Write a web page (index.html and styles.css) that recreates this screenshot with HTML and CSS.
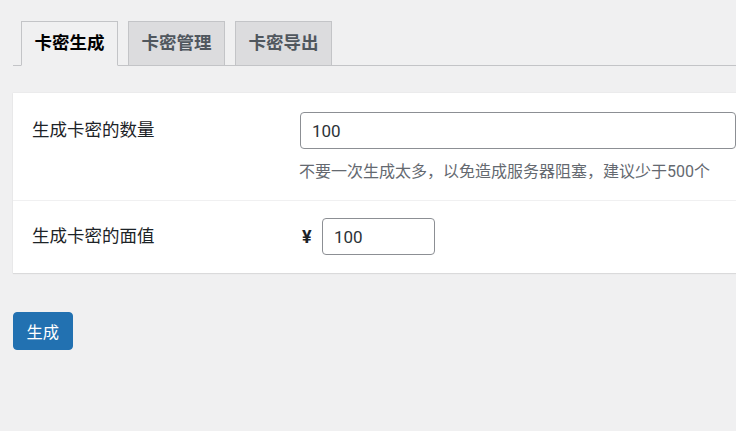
FILE: index.html
```html
<!DOCTYPE html>
<html lang="zh-CN">
<head>
<meta charset="utf-8">
<title>卡密生成</title>
<link rel="stylesheet" href="styles.css">
</head>
<body>
<div class="wrap">
  <nav class="tabs">
    <a class="tab active" href="#">卡密生成</a>
    <a class="tab" href="#">卡密管理</a>
    <a class="tab" href="#">卡密导出</a>
  </nav>
  <div class="card">
    <div class="row">
      <div class="label">生成卡密的数量</div>
      <div class="field">
        <input class="input wide" type="text" value="100">
        <p class="desc">不要一次生成太多，以免造成服务器阻塞，建议少于500个</p>
      </div>
    </div>
    <div class="row sep">
      <div class="label">生成卡密的面值</div>
      <div class="field inline">
        <span class="currency">¥</span>
        <input class="input small" type="text" value="100">
      </div>
    </div>
  </div>
  <button class="btn" type="button">生成</button>
</div>
</body>
</html>
```
FILE: styles.css
```css
html, body {
  margin: 0;
  padding: 0;
  background: #f0f0f1;
  overflow: hidden;
}
body {
  font-family: Roboto, "Noto Sans CJK SC", sans-serif;
  color: #1d2327;
}
.wrap {
  padding-left: 13px;
}
.tabs {
  display: flex;
  gap: 10px;
  padding: 21px 0 0 8px;
  border-bottom: 1px solid #c3c4c7;
}
.tab {
  display: block;
  margin-bottom: -1px;
  padding: 6px 12.5px;
  line-height: 31px;
  font-size: 17.5px;
  font-weight: 700;
  color: #50575e;
  background: #dcdcde;
  border: 1px solid #c3c4c7;
  text-decoration: none;
}
.tab.active {
  color: #000;
  background: #f0f0f1;
  border-bottom-color: #f0f0f1;
}
.card {
  margin-top: 27px;
  background: #fff;
  box-shadow: 0 1px 1px rgba(0, 0, 0, 0.07), 0 0 0 0.5px rgba(0, 0, 0, 0.04);
}
.row {
  display: grid;
  grid-template-columns: 268px 1fr;
  padding: 19px 0 16px 19px;
}
.row.sep {
  border-top: 1px solid #f0f0f1;
  padding: 17px 0 18px 19px;
}
.label {
  font-size: 17.5px;
  line-height: 37px;
}
.input {
  box-sizing: border-box;
  height: 37px;
  margin: 0;
  padding: 0 11px;
  font-family: Roboto, "Noto Sans CJK SC", sans-serif;
  font-size: 17px;
  color: #2c3338;
  background: #fff;
  border: 1px solid #8c8f94;
  border-radius: 4px;
}
.input.wide {
  display: block;
  width: 100%;
  border-right-width: 1px;
}
.input.small {
  width: 113px;
}
.desc {
  margin: 10px 0 0 -1px;
  font-size: 16px;
  line-height: 25px;
  color: #646970;
}
.field {
  min-width: 0;
}
.field.inline {
  display: flex;
  align-items: center;
}
.currency {
  width: 22px;
  padding-left: 2px;
  box-sizing: border-box;
  font-size: 18px;
  font-weight: 700;
  color: #1d2327;
}
.btn {
  display: block;
  margin-top: 39px;
  height: 38px;
  padding: 0 12.5px;
  font-family: Roboto, "Noto Sans CJK SC", sans-serif;
  font-size: 16.25px;
  color: #fff;
  background: #2271b1;
  border: 1px solid #2271b1;
  border-radius: 4px;
}
```
